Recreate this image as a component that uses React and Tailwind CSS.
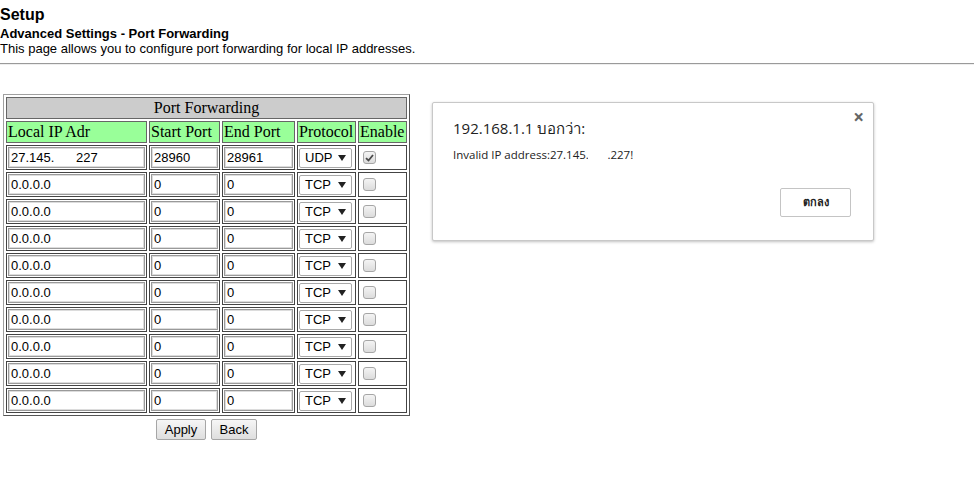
import React from 'react'

const rows = [
  { ip: '27.145.      227', start: '28960', end: '28961', proto: 'UDP', on: true },
  ...Array.from({ length: 9 }, () => ({ ip: '0.0.0.0', start: '0', end: '0', proto: 'TCP', on: false })),
]

function TextBox({ value, width }) {
  return (
    <div
      className={`${width} h-[21px] border border-[#9a9a9a] shadow-[inset_0_0_0_1px_#dcdcdc] bg-white px-[2px] text-[13px] leading-[19px] whitespace-pre text-black font-['Liberation_Sans',Arial,sans-serif]`}
    >
      {value}
    </div>
  )
}

function Select({ value }) {
  return (
    <div className="w-[53px] h-[20px] border border-[#a9a9a9] rounded-[2px] bg-white flex items-center justify-between pl-[5px] pr-[5px] text-[13px] font-['Liberation_Sans',Arial,sans-serif]">
      <span>{value}</span>
      <svg width="8" height="6" viewBox="0 0 8 6">
        <path d="M0 0 L8 0 L4 6 Z" fill="#222" />
      </svg>
    </div>
  )
}

function Check({ on }) {
  return (
    <div className="w-[13px] h-[13px] rounded-[3px] border border-[#a6a6a6] bg-gradient-to-b from-[#f4f4f4] to-[#dcdcdc] flex items-center justify-center">
      {on && (
        <svg width="9" height="8" viewBox="0 0 9 8">
          <path d="M1 4.2 L3.5 6.5 L8 1" stroke="#4a4a4a" strokeWidth="1.8" fill="none" />
        </svg>
      )}
    </div>
  )
}

export default function App() {
  return (
    <div className="relative w-[974px] h-[483px] overflow-hidden bg-white text-black font-['Liberation_Sans',Arial,sans-serif]">
      <div className="pt-[6px]">
        <h1 className="text-[16px] font-bold leading-[18px]">Setup</h1>
        <h2 className="mt-[2px] text-[13px] font-bold leading-[15px]">Advanced Settings - Port Forwarding</h2>
        <p className="text-[13px] leading-[15px]">This page allows you to configure port forwarding for local IP addresses.</p>
      </div>
      <div className="mt-[7px] border-t border-b border-t-[#9a9a9a] border-b-[#eeeeee]" />

      <div className="mt-[29px] ml-[3px] w-[407px]">
        <table className="w-[407px] table-fixed border-separate border-spacing-[2px] border border-t-[#a0a0a0] border-l-[#a0a0a0] border-r-[#555] border-b-[#555] font-['Liberation_Serif','Times_New_Roman',serif]">
          <colgroup>
            <col className="w-[141px]" />
            <col className="w-[71px]" />
            <col className="w-[73px]" />
            <col className="w-[59px]" />
            <col className="w-[49px]" />
          </colgroup>
          <thead>
            <tr>
              <th colSpan={5} className="h-[22px] bg-[#cccccc] border border-[#666] p-0 text-[16px] font-normal leading-[18px] text-center">
                Port Forwarding
              </th>
            </tr>
            <tr className="bg-[#99ff99]">
              {['Local IP Adr', 'Start Port', 'End Port', 'Protocol', 'Enable'].map((h) => (
                <th key={h} className="h-[22px] border border-[#666] p-0 pl-px text-left text-[16px] font-normal leading-[18px] whitespace-nowrap overflow-hidden">
                  {h}
                </th>
              ))}
            </tr>
          </thead>
          <tbody>
            {rows.map((r, i) => (
              <tr key={i}>
                <td className="h-[25px] border border-[#444] p-px">
                  <TextBox value={r.ip} width="w-[137px]" />
                </td>
                <td className="h-[25px] border border-[#444] p-px">
                  <TextBox value={r.start} width="w-[67px]" />
                </td>
                <td className="h-[25px] border border-[#444] p-px">
                  <TextBox value={r.end} width="w-[69px]" />
                </td>
                <td className="h-[25px] border border-[#444] p-px">
                  <Select value={r.proto} />
                </td>
                <td className="h-[25px] border border-[#444] p-0 pl-[4px]">
                  <Check on={r.on} />
                </td>
              </tr>
            ))}
          </tbody>
        </table>
        <div className="mt-[3px] flex justify-center gap-[5px]">
          <button className="h-[21px] w-[50px] border border-[#a6a6a6] rounded-[2px] bg-gradient-to-b from-[#f6f6f6] to-[#dedede] text-[13px] leading-[19px]">
            Apply
          </button>
          <button className="h-[21px] w-[46px] border border-[#a6a6a6] rounded-[2px] bg-gradient-to-b from-[#f6f6f6] to-[#dedede] text-[13px] leading-[19px]">
            Back
          </button>
        </div>
      </div>

      <div className="absolute left-[432px] top-[102px] w-[442px] h-[139px] bg-white border border-[#c8c8c8] rounded-[2px] shadow-[0_1px_3px_rgba(0,0,0,0.25)] font-['Open_Sans','Noto_Sans',sans-serif]">
        <div className="absolute right-[9px] top-[2px] text-[19px] leading-[24px] text-[#666] font-bold">×</div>
        <div className="pl-[20px] pt-[15px] text-[15px] leading-[20px] text-[#222]">192.168.1.1 บอกว่า:</div>
        <div className="pl-[20px] pt-[9px] text-[11.5px] leading-[16px] text-[#222]">Invalid IP address:27.145.1&nbsp;&nbsp;&nbsp;&nbsp;.227!</div>
        <div className="absolute left-[155px] top-[38px] w-[18px] h-[52px] bg-white" />
        <div className="absolute left-[347px] top-[85px] w-[71px] h-[29px] border border-[#c4c4c4] rounded-[2px] bg-white flex items-center justify-center text-[11px] font-bold text-[#222]">
          ตกลง
        </div>
      </div>
    </div>
  )
}
